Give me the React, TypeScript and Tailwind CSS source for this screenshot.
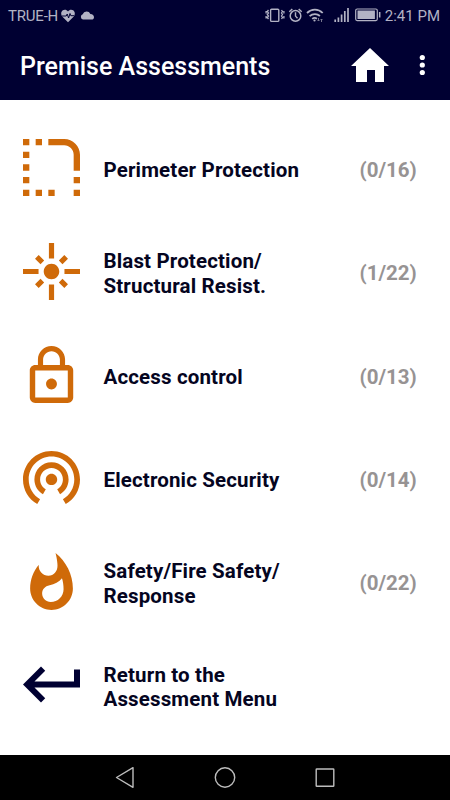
import React from 'react';

type Item = { label: string[]; count?: string; viewBox: string; path: string };

const items: Item[] = [
  {
    label: ['Perimeter Protection'],
    count: '(0/16)',
    viewBox: '3 3 18 18',
    path: 'M19 19h2v2h-2zM19 15h2v2h-2zM3 3h2v2H3zM7 3h2v2H7zM3 7h2v2H3zM3 11h2v2H3zM3 15h2v2H3zM3 19h2v2H3zM7 19h2v2H7zM11 19h2v2h-2zM21 8c0-2.76-2.24-5-5-5h-5v2h5c1.65 0 3 1.35 3 3v5h2V8z',
  },
  {
    label: ['Blast Protection/', 'Structural Resist.'],
    count: '(1/22)',
    viewBox: '1 1 22 22',
    path: 'M7 11H1v2h6v-2zm2.17-3.24L7.05 5.64 5.64 7.05l2.12 2.12 1.41-1.41zM13 1h-2v6h2V1zm5.36 6.05l-1.41-1.41-2.12 2.12 1.41 1.41 2.12-2.12zM17 11v2h6v-2h-6zm-5-2c-1.66 0-3 1.34-3 3s1.34 3 3 3 3-1.34 3-3-1.34-3-3-3zm2.83 7.24l2.12 2.12 1.41-1.41-2.12-2.12-1.41 1.41zm-9.19.71l1.41 1.41 2.12-2.12-1.41-1.41-2.12 2.12zM11 23h2v-6h-2v6z',
  },
  {
    label: ['Access control'],
    count: '(0/13)',
    viewBox: '1.5 1 21 21',
    path: 'M12 17c1.1 0 2-.9 2-2s-.9-2-2-2-2 .9-2 2 .9 2 2 2zm6-9h-1V6c0-2.76-2.24-5-5-5S7 3.24 7 6v2H6c-1.1 0-2 .9-2 2v10c0 1.1.9 2 2 2h12c1.1 0 2-.9 2-2V10c0-1.1-.9-2-2-2zM8.9 6c0-1.71 1.39-3.1 3.1-3.1s3.1 1.39 3.1 3.1v2H8.9V6zM18 20H6V10h12v10z',
  },
  {
    label: ['Electronic Security'],
    count: '(0/14)',
    viewBox: '2 2.33 20 20',
    path: 'M12 11c-1.1 0-2 .9-2 2s.9 2 2 2 2-.9 2-2-.9-2-2-2zm6 2c0-3.31-2.69-6-6-6s-6 2.69-6 6c0 2.22 1.21 4.15 3 5.19l1-1.74c-1.19-.7-2-1.97-2-3.45 0-2.21 1.79-4 4-4s4 1.79 4 4c0 1.48-.81 2.75-2 3.45l1 1.74c1.79-1.04 3-2.97 3-5.19zM12 3C6.48 3 2 7.48 2 13c0 3.7 2.01 6.92 4.99 8.65l1-1.73C5.61 18.53 4 15.96 4 13c0-4.42 3.58-8 8-8s8 3.58 8 8c0 2.96-1.61 5.53-4 6.92l1 1.73c2.99-1.73 5-4.95 5-8.65 0-5.52-4.48-10-10-10z',
  },
  {
    label: ['Safety/Fire Safety/', 'Response'],
    count: '(0/22)',
    viewBox: '1.33 .67 21.33 21.33',
    path: 'M13.5.67s.74 2.65.74 4.8c0 2.06-1.35 3.73-3.41 3.73-2.07 0-3.63-1.67-3.63-3.73l.03-.36C5.21 7.51 4 10.62 4 14c0 4.42 3.58 8 8 8s8-3.58 8-8C20 8.61 17.41 3.8 13.5.67zM11.71 19c-1.78 0-3.22-1.4-3.22-3.14 0-1.62 1.05-2.76 2.81-3.12 1.77-.36 3.6-1.21 4.62-2.58.39 1.29.59 2.65.59 4.04 0 2.65-2.15 4.8-4.8 4.8z',
  },
  {
    label: ['Return to the', 'Assessment Menu'],
    viewBox: '2 2.5 19 19',
    path: 'M19 7v4H5.83l3.58-3.59L8 6l-6 6 6 6 1.41-1.41L5.83 13H21V7z',
  },
];

function StatusBar() {
  return (
    <div className="flex h-8 items-center pl-2 pr-[10px] text-[#b2b2c4]">
      <span className="text-[15px] leading-8 tracking-[-0.200px]">TRUE-H</span>
      <svg className="ml-[3px] h-[14px] w-[14px] shrink-0" viewBox="0 0 14 14">
        <path fill="currentColor" d="M7 13.3 1.2 7.4C-.5 5.3.1 2.6 1.8 1.3 3.5.1 5.7.6 7 2.4 8.3.6 10.5.1 12.2 1.3c1.7 1.3 2.3 4 .6 6.1z" />
        <path fill="none" stroke="#000032" strokeWidth="1" d="M1 7h4.200l1-2 1.400 4 1.400-4.500.8 2.200H13" />
      </svg>
      <svg className="mb-[2px] ml-[5px] h-[9px] w-[14px] shrink-0" viewBox="0 0 14 9">
        <path fill="currentColor" d="M3 8.5a2.7 2.7 0 0 1-.3-5.2A4.2 4.2 0 0 1 10.4 3C12.6 3.2 14 4.400 14 6.200 14 7.600 13 8.500 11.600 8.500z" />
      </svg>
      <div className="grow" />
      <svg className="h-8 w-[116px] shrink-0" viewBox="265 0 116 32" fill="none" stroke="currentColor">
        <rect x="270.600" y="9.200" width="8.200" height="12.200" rx="1" strokeWidth="1.400" />
        <path strokeWidth="1.300" d="m268.500 10-1.200 1.500 1.200 1.500-1.200 1.500 1.200 1.500-1.200 1.500 1.200 1.500M266.100 11v2.500m0 2.500v2.500M281.500 10l1 1.500-1 1.500 1 1.500-1 1.500 1 1.500-1 1.500M283.900 11v2.500m0 2.500v2.500" />
        <circle cx="295.500" cy="15.900" r="5.300" strokeWidth="1.500" />
        <path strokeWidth="1.400" d="M295.500 12.300v3.800l2 2.200M289.300 11.800l3-2.900M301.700 11.800l-3-2.900" />
        <path strokeWidth="1.800" d="M307 13c4.500-4.600 11.300-4.600 15.700 0M309.600 16.200c3.100-2.800 7.500-2.800 10.300-.2M312.200 18.900c1.700-1.300 3.200-1.300 4.700-.2" />
        <circle cx="314.500" cy="20.500" r="1.100" fill="currentColor" stroke="none" />
        <path stroke="#77778e" strokeWidth="1" d="M318.500 18v3m-1-1 1 1 1-1M321.500 22v-3m-1 1 1-1 1 1" />
        <path strokeWidth="1.700" d="M335.200 19.500V22M338.400 17.500V22M341.600 14.500V22M344.800 11V22M348 8V22" />
        <rect x="355.700" y="9" width="21.600" height="11.600" rx="1.500" strokeWidth="1.200" />
        <rect x="357.500" y="10.500" width="17.400" height="8.500" fill="currentColor" stroke="none" />
        <path strokeWidth="1.500" d="M379.700 12v5.500" />
      </svg>
      <span className="ml-[4px] whitespace-nowrap text-[15px] leading-8">2:41 PM</span>
    </div>
  );
}

export default function App() {
  return (
    <div className="flex h-[800px] w-[450px] flex-col overflow-hidden bg-white font-['Roboto','Liberation_Sans',sans-serif]">
      <header className="h-[100px] shrink-0 bg-[#000032]">
        <StatusBar />
        <div className="flex h-[66px] items-center pl-5">
          <h1 className="w-[331px] whitespace-nowrap pt-[3px] text-[25px] font-medium leading-8 text-white">Premise Assessments</h1>
          <svg className="h-[34px] w-[38px] shrink-0" viewBox="0 0 38 34">
            <path fill="white" d="M19 0 38 18h-5v16H24V22h-8v12H5V18H0z" />
          </svg>
          <svg className="ml-[30px] h-[22px] w-[6px] shrink-0" viewBox="0 0 6 22" fill="white">
            <circle cx="3.300" cy="3.500" r="2.600" />
            <circle cx="3.300" cy="11" r="2.600" />
            <circle cx="3.300" cy="18.500" r="2.600" />
          </svg>
        </div>
      </header>

      <main className="flex grow flex-col pt-[18.300px]">
        {items.map((item) => (
          <div key={item.label[0]} className="flex h-[103.300px] shrink-0 items-center pl-[23px]">
            <svg
              className={`mb-[4px] h-[57px] w-[57px] shrink-0 ${item.count ? 'text-[#cf6a09]' : 'text-[#000032]'}`}
              viewBox={item.viewBox}
            >
              <path fill="currentColor" d={item.path} />
            </svg>
            <div className="ml-[23.500px] w-[256px] whitespace-nowrap pt-[1.200px] text-[20.500px] font-bold leading-[24.500px] tracking-[0.150px] text-[#05051f]">
              {item.label.map((line) => (
                <div key={line}>{line}</div>
              ))}
            </div>
            {item.count && <span className="text-[20.500px] font-bold leading-6 text-[#979393]">{item.count}</span>}
          </div>
        ))}
      </main>

      <nav className="flex h-[45px] shrink-0 items-center justify-center bg-black">
        <svg className="h-[45px] w-[250px]" viewBox="100 755 250 45" fill="none" stroke="#bdbdbd" strokeWidth="1.400">
          <path strokeLinejoin="round" d="M133 767.700v19.600L116.500 777.500z" />
          <circle cx="225" cy="777.500" r="9.700" />
          <rect x="316.200" y="769" width="17.600" height="17.300" rx=".6" />
        </svg>
      </nav>
    </div>
  );
}
